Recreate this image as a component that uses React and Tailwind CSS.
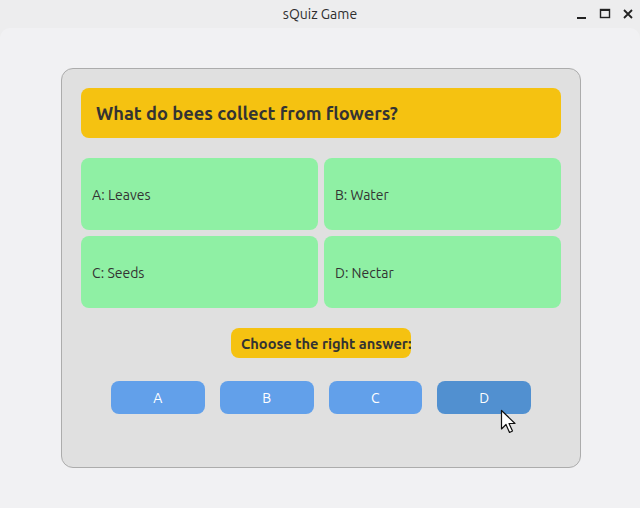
import React from "react";

const font = { fontFamily: "Ubuntu, 'Noto Sans', 'Open Sans', sans-serif" };

export default function App() {
  return (
    <div className="relative w-[640px] h-[508px] bg-[#ededee] overflow-hidden flex flex-col" style={font}>
      <div className="h-[28px] shrink-0 relative flex items-center justify-center">
        <span className="text-[14px] text-[#2e2e2e]">sQuiz Game</span>
        <div className="absolute right-[6px] top-0 h-[28px] flex items-center gap-[11px]">
          <svg width="12" height="12" viewBox="0 0 12 12"><rect x="1" y="9" width="9" height="2" fill="#222" /></svg>
          <svg width="12" height="12" viewBox="0 0 12 12"><rect x="1.5" y="1.5" width="9" height="8" fill="none" stroke="#222" strokeWidth="1.4" /><rect x="1" y="1" width="10" height="2" fill="#222" /></svg>
          <svg width="12" height="12" viewBox="0 0 12 12"><path d="M2 2 L10 10 M10 2 L2 10" stroke="#222" strokeWidth="1.8" /></svg>
        </div>
      </div>
      <div className="flex-1 bg-[#f1f1f3] rounded-t-[10px] pt-[40px] px-[61px]">
        <div className="w-[520px] h-[400px] bg-[#e0e0e0] border border-[#acacac] rounded-[12px] px-[19px] pt-[19px]">
          <div className="h-[50px] bg-[#f5c211] rounded-[8px] flex items-center pl-[15px] pt-[2px]">
            <span className="text-[18.3px] font-bold text-[#333333]">What do bees collect from flowers?</span>
          </div>
          <div className="mt-[20px] grid grid-cols-2 gap-[6px]">
            {["A: Leaves", "B: Water", "C: Seeds", "D: Nectar"].map((t) => (
              <div key={t} className="h-[72px] bg-[#8ff0a4] rounded-[8px] flex items-center pl-[11px] pt-[3px]">
                <span className="text-[14px] text-[#333333]">{t}</span>
              </div>
            ))}
          </div>
          <div className="mt-[20px] flex justify-center">
            <div className="w-[180px] h-[30px] bg-[#f5c211] rounded-[8px] flex items-center pl-[10px] pt-[1px] overflow-hidden whitespace-nowrap">
              <span className="text-[14.6px] font-bold text-[#333333]">Choose the right answer:</span>
            </div>
          </div>
          <div className="mt-[23px] flex justify-center">
            <div className="w-[420px] flex gap-[15px]">
              {["A", "B", "C", "D"].map((l) => (
                <div key={l} className={`flex-1 h-[33px] rounded-[8px] flex items-center justify-center pt-[1px] text-white text-[14px] ${l === "D" ? "bg-[#5190d0]" : "bg-[#62a0ea]"}`}>
                  {l}
                </div>
              ))}
            </div>
          </div>
        </div>
      </div>
      <svg className="absolute left-[500px] top-[409px]" width="20" height="28" viewBox="0 0 20 28">
        <path d="M1.5 1.5 L1.5 20 L6 15.5 L9.5 23.5 L12.5 22 L9 14.5 L15 14.5 Z" fill="#fff" stroke="#111" strokeWidth="1.2" strokeLinejoin="round" />
      </svg>
    </div>
  );
}
